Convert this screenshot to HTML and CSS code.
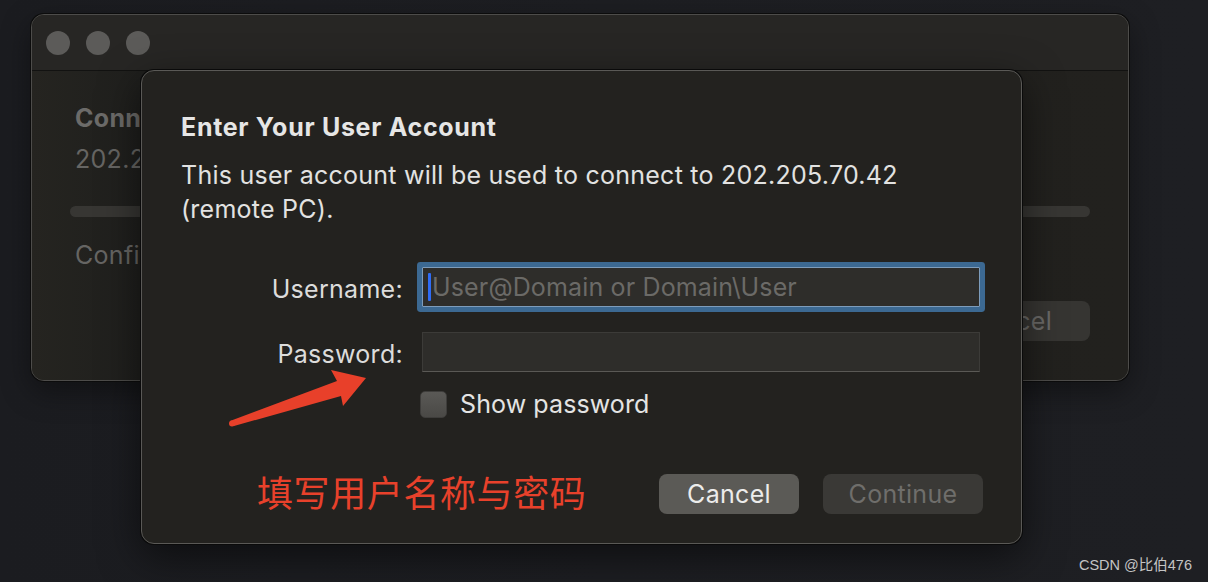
FILE: index.html
```html
<!DOCTYPE html>
<html lang="en">
<head>
<meta charset="utf-8">
<title>Enter Your User Account</title>
<link rel="stylesheet" href="styles.css">
</head>
<body>
<div class="desktop">
  <div class="window">
    <div class="titlebar">
      <span class="light"></span>
      <span class="light"></span>
      <span class="light"></span>
    </div>
    <div class="window-body">
      <div class="win-title">Connecting to</div>
      <div class="win-host">202.205.70.42</div>
      <div class="progress"></div>
      <div class="win-status">Configuring remote PC...</div>
      <div class="win-actions"><span class="win-btn">Cancel</span></div>
    </div>
  </div>

  <div class="sheet">
    <h1 class="sheet-title">Enter Your User Account</h1>
    <p class="sheet-desc">This user account will be used to connect to 202.205.70.42 (remote PC).</p>
    <div class="form">
      <label class="label">Username:</label>
      <div class="field focused"><span class="caret"></span><span class="placeholder">User@Domain or Domain\User</span></div>
      <label class="label">Password:</label>
      <div class="field"></div>
      <span class="spacer"></span>
      <div class="check-row"><span class="checkbox"></span><span class="check-label">Show password</span></div>
    </div>
    <div class="actions">
      <button class="btn btn-cancel">Cancel</button>
      <button class="btn btn-continue">Continue</button>
    </div>
  </div>

  <svg class="arrow" width="146" height="66" viewBox="0 0 146 66">
    <polygon fill="#e8402a" points="4,55 111,15 105,4 140,12 117,40 115,30 8,60"/>
    <circle cx="6" cy="57.5" r="3" fill="#e8402a"/>
  </svg>
  <div class="note">填写用户名称与密码</div>
  <div class="watermark">CSDN @比伯476</div>
</div>
</body>
</html>
```
FILE: styles.css
```css
* { box-sizing: border-box; }
html, body { margin: 0; padding: 0; }
body {
  width: 1208px;
  height: 582px;
  overflow: hidden;
  background: linear-gradient(90deg, #1b1c20 0%, #1d1e22 50%, #1e1f23 100%);
  font-family: Inter, "Noto Sans", sans-serif;
}
.desktop { position: relative; width: 1208px; height: 582px; }

/* back window */
.window {
  position: absolute;
  left: 31px;
  top: 14px;
  width: 1098px;
  height: 367px;
  border-radius: 13px;
  background: #24231f;
  border: 1px solid #4d4c4a;
  box-shadow: 0 0 0 1px #0c0c0c, 0 10px 30px rgba(0,0,0,0.4);
  overflow: hidden;
  display: flex;
  flex-direction: column;
}
.titlebar {
  height: 56px;
  flex: none;
  display: flex;
  align-items: center;
  gap: 16px;
  padding-left: 14px;
  background: #272624;
  border-bottom: 1px solid #121211;
}
.light {
  width: 24px;
  height: 24px;
  border-radius: 50%;
  background: #5c5b59;
}
.window-body {
  flex: 1;
  padding: 0 38px;
  background: linear-gradient(90deg, #252420 0%, #1f1f1d 10%, #22211e 100%);
  color: #666563;
  font-size: 25px;
  letter-spacing: 0.3px;
}
.win-title { font-weight: 700; margin: 32px 0 0 5px; line-height: 30px; color: #6c6b69; }
.win-host { margin: 11px 0 0 5px; line-height: 30px; }
.progress {
  margin-top: 32px;
  height: 11px;
  border-radius: 6px;
  background: #373633;
}
.win-status { margin: 23px 0 0 5px; line-height: 30px; }
.win-actions { display: flex; justify-content: flex-end; margin-top: 31px; }
.win-btn {
  height: 40px;
  line-height: 40px;
  padding: 0 38px;
  border-radius: 8px;
  background: #363532;
  color: #6a6967;
}

/* sheet dialog */
.sheet {
  position: absolute;
  left: 141px;
  top: 70px;
  width: 881px;
  height: 474px;
  border-radius: 13px;
  background: #23221f;
  border: 1px solid #5a5956;
  box-shadow: 0 0 0 1px #0a0a0a, 0 12px 40px rgba(0,0,0,0.55);
  padding: 41px 40px 0 39px;
  color: #e4e4e3;
  display: flex;
  flex-direction: column;
}
.sheet-title {
  margin: 0;
  font-size: 25px;
  font-weight: 700;
  line-height: 30px;
  color: #e6e6e5;
  letter-spacing: 0.7px;
}
.sheet-desc {
  margin: 16px 0 0;
  font-size: 25px;
  line-height: 34px;
  width: 760px;
  color: #e2e2e1;
  letter-spacing: 0.25px;
}
.form {
  margin-top: 41px;
  display: grid;
  grid-template-columns: 222px 558px;
  column-gap: 19px;
  row-gap: 25px;
  align-items: center;
}
.label {
  text-align: right;
  font-size: 25px;
  line-height: 30px;
  color: #dcdcdb;
  letter-spacing: 0.3px;
  position: relative;
  top: 2px;
}
.field {
  height: 40px;
  background: #2e2d2a;
  border: 1px solid #3c3b38;
  border-bottom-color: #5a5955;
  display: flex;
  align-items: center;
  padding-left: 5px;
}
.field.focused {
  border-color: #7d9cbb;
  box-shadow: 0 0 0 5px #3c6992;
  border-radius: 1px;
}
.caret {
  width: 3px;
  height: 28px;
  background: #2f6cf5;
  border-radius: 1px;
  margin-right: 1px;
}
.placeholder { font-size: 25px; color: #6b6a67; letter-spacing: 0.15px; }
.spacer { display: block; }
.check-row {
  display: flex;
  align-items: center;
  gap: 13px;
  margin-top: -8px;
  margin-left: -2px;
}
.checkbox {
  width: 27px;
  height: 27px;
  border-radius: 5px;
  background: linear-gradient(#5a5956, #4a4946);
  border: 1px solid #3e3d3b;
}
.check-label { font-size: 25px; color: #e4e4e3; letter-spacing: 0.1px; }

.actions {
  margin-top: 55px;
  margin-right: -2px;
  display: flex;
  justify-content: flex-end;
  gap: 24px;
}
.btn {
  height: 40px;
  border: none;
  border-radius: 8px;
  font-family: Inter, "Noto Sans", sans-serif;
  font-size: 25px;
  letter-spacing: 0.3px;
  padding: 0;
}
.btn-cancel { width: 140px; background: #5b5a56; color: #ececeb; }
.btn-continue { width: 160px; background: #3a3936; color: #6f6e6b; }

/* annotations */
.arrow { position: absolute; left: 226px; top: 366px; }
.note {
  position: absolute;
  left: 257px;
  top: 469px;
  font-family: "Noto Sans CJK SC", sans-serif;
  font-size: 36px;
  line-height: 44px;
  color: #e8412b;
  letter-spacing: 0.6px;
}
.watermark {
  position: absolute;
  right: 16px;
  top: 555px;
  font-family: "Liberation Sans", "Noto Sans CJK SC", sans-serif;
  font-size: 14.5px;
  line-height: 20px;
  color: #c4c4c4;
}
```
